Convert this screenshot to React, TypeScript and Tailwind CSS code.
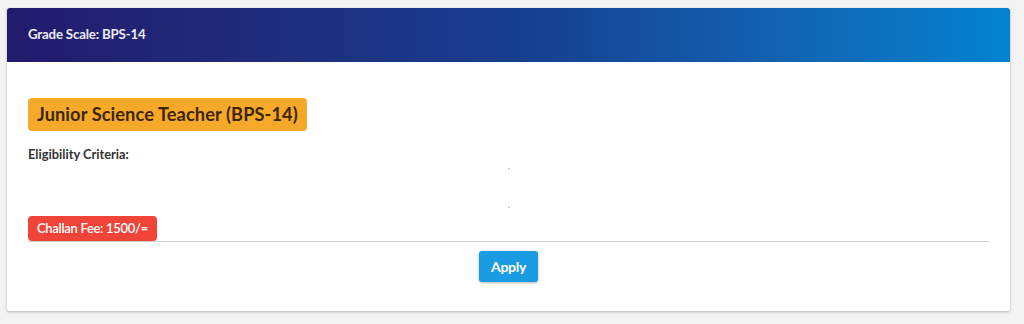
const FONT = { fontFamily: 'Lato, "Open Sans", sans-serif' };

export default function App() {
  return (
    <div className="min-h-[324px] w-full bg-[#f3f3f3] pt-2 pb-3" style={FONT}>
      <div className="ml-[7px] mr-[14px] overflow-hidden rounded-[3px] bg-white shadow-[0_1px_3px_rgba(0,0,0,0.25)]">
        {/* Header */}
        <div className="flex h-[54px] items-center bg-gradient-to-r from-[#221a6c] via-[#173d8e] to-[#0283cf] px-[21px]">
          <h3 className="text-[13.3px] font-bold tracking-[-0.2px] text-[#ecebf7]">Grade Scale: BPS-14</h3>
        </div>

        {/* Body */}
        <div className="px-[21px] pt-9 pb-[29px]">
          <span className="inline-flex h-[33px] items-center rounded-[4px] bg-[#f6a828] px-[9px] text-[18.2px] font-bold tracking-[0.1px] text-[#3b2608]">
            Junior Science Teacher (BPS-14)
          </span>

          <p className="mt-[14px] text-[12.8px] leading-[18px] font-bold text-[#333]">Eligibility Criteria:</p>

          <div className="flex h-[12px] items-center justify-center">
            <span className="block h-[2px] w-[2px] rounded-full bg-[#c9c9c9]" />
          </div>
          <div className="mt-[26px] flex h-[12px] items-center justify-center">
            <span className="block h-[2px] w-[2px] rounded-full bg-[#c9c9c9]" />
          </div>

          <span className="mt-[3px] inline-flex h-[25px] items-center rounded-[4px] bg-[#ef4437] px-[9px] text-[13px] font-semibold tracking-[-0.3px] text-white">
            Challan Fee: 1500/=
          </span>
          <hr className="border-t border-[#cfcfcf]" />

          <div className="mt-[9px] flex justify-center">
            <button className="h-[31px] rounded-[3px] bg-[#1b9ce2] px-[12px] text-[14px] font-bold tracking-[-0.3px] text-white shadow-[0_1px_3px_rgba(0,0,0,0.3)]">
              Apply
            </button>
          </div>
        </div>
      </div>
    </div>
  );
}
